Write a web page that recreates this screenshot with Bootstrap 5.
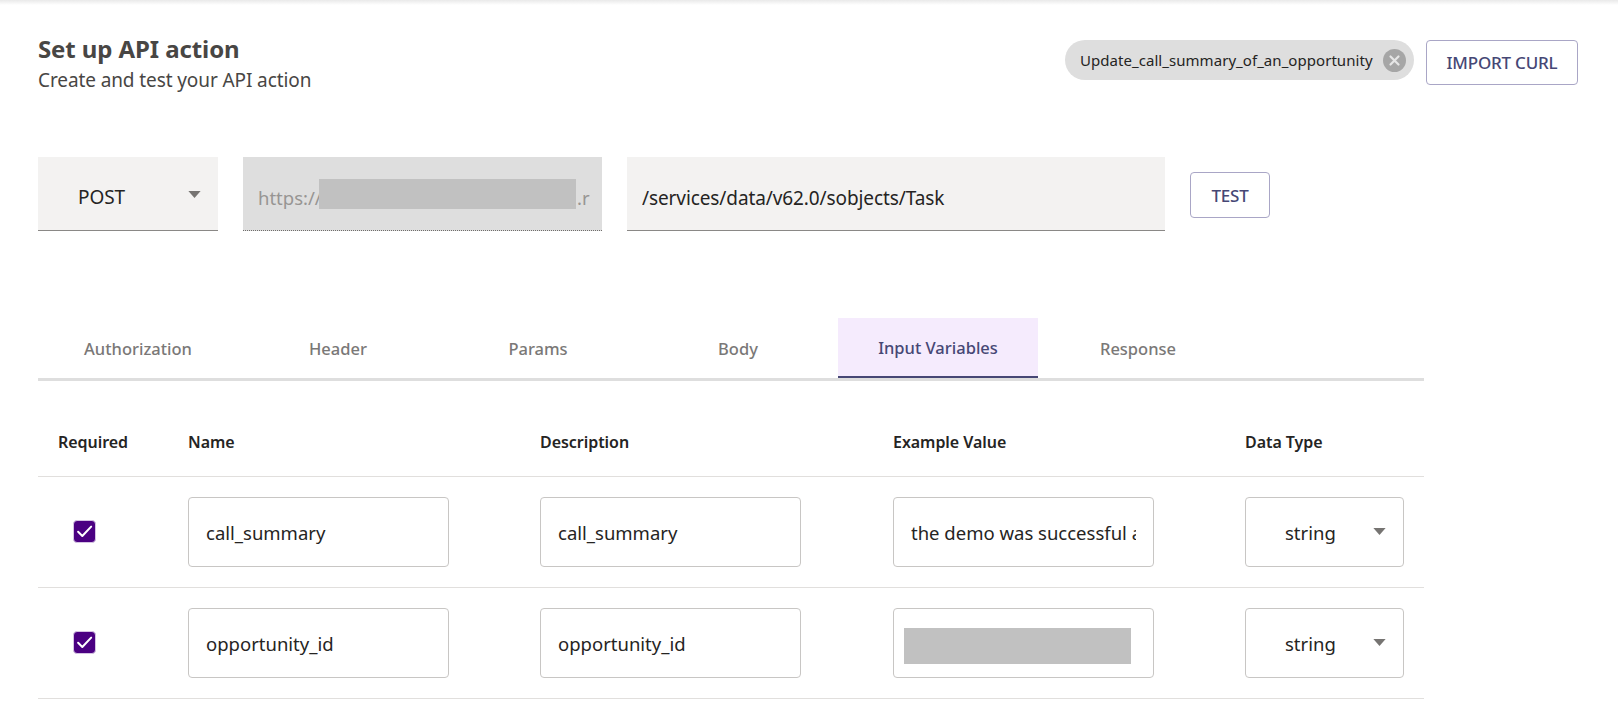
<!doctype html>
<html lang="en">
<head>
<meta charset="utf-8">
<title>Set up API action</title>
<link href="https://cdn.jsdelivr.net/npm/bootstrap@5.3.0/dist/css/bootstrap.min.css" rel="stylesheet">
<style>
html,body{height:721px;overflow:hidden}
body{font-family:"Noto Sans","Open Sans",sans-serif;color:#252423;background:#fff}
.topshade{height:5px;background:linear-gradient(#e9e9e9,#fff)}
.pagewrap{padding:0 40px 0 38px}
.headrow{height:80px;padding-top:30px}
.ttl{font-size:24px;line-height:30px;font-weight:700;color:#484644;margin:-1px 0 1px;letter-spacing:-.1px}
.sub{font-size:19px;line-height:30px;color:#484644;letter-spacing:-.1px}
.headright{margin-top:5px}
.chip{height:40px;width:349px;padding:0 8px 0 15px;border-radius:20px;background:#dedede;font-size:15px;letter-spacing:.05px;color:#252423}
.xdot{width:23px;height:23px;flex:none}
.outbtn{border:1px solid #a9a6c6;border-radius:4px;background:#fff;color:#464775;font-weight:500;font-size:17px;letter-spacing:-.2px;padding:0}
.outbtn:hover{background:#fff;color:#464775;border-color:#a9a6c6}
.btn-import{width:152px;height:45px;margin-left:12px}
.urlrow{margin-top:72px;height:74px;gap:25px}
.fld{height:74px;border:0;border-bottom:1px solid #8a8886;border-radius:0;background-color:#f3f2f1;font-size:19px;letter-spacing:-.1px;color:#252423}
.fld:focus{background-color:#f3f2f1;box-shadow:none;border-color:#8a8886}
.methodsel{width:180px;padding:8px 30px 0 40px;background-position:right 17px top 34px;background-size:13px 7px;background-image:url("data:image/svg+xml,%3csvg xmlns='http://www.w3.org/2000/svg' viewBox='0 0 14 8'%3e%3cpath fill='%23767472' d='M0 0h14L7 8z'/%3e%3c/svg%3e")}
.hostbox{width:359px;background:#dedede;border-bottom:1px dotted #6f6d6b;padding:8px 0 0 15px;font-size:18.5px;color:#979593;white-space:nowrap}
.hostpre{width:61px;flex:none}
.blot{background:#c1c1c1;flex:none}
.blot-host{width:257px;height:30px;margin-top:-8px}
.hostend{margin-left:1px}
.pathfld{width:538px;padding:8px 15px 0}
.btn-test{width:80px;height:46px;align-self:center;margin-top:2px;padding-top:1px}
.tabstrip{margin-top:87px;width:1386px;height:63px;border-bottom:3px solid #dedede}
.tabitem{width:200px;height:61px;line-height:60px;text-align:center;color:#7a7877;font-size:16.5px;font-weight:500;padding:0;border:0;border-radius:0;background:transparent}
.tabitem.on{background:#f5ebfd;color:#464775;border-bottom:2px solid #464775;margin-bottom:-1px;height:60px}
.vartable{width:1386px;table-layout:fixed;margin:0}
.vartable>:not(caption)>*>*{padding:0;border-bottom:1px solid #e1dfdd;vertical-align:middle;box-shadow:none;background:transparent;color:#252423}
.vartable>thead>tr>th{height:95px;padding-top:28px;font-size:16px;font-weight:600;letter-spacing:-.05px}
.vartable tbody td{height:111px}
.vartable>thead>tr>th.thfirst{padding-left:20px}
.ticker{width:23px;height:23px;margin:0 0 0 35px;background-color:#4b0082;border-color:#d5c3e3;border-radius:4px;display:block;opacity:1!important;float:none}
.ticker:checked{background-color:#4b0082;border-color:#d5c3e3;background-size:100% 100%;background-image:url("data:image/svg+xml,%3csvg xmlns='http://www.w3.org/2000/svg' viewBox='0 0 23 23'%3e%3cpath fill='none' stroke='%23fff' stroke-width='2.2' stroke-linecap='round' stroke-linejoin='round' d='M4.5 11.8l4.6 4.6L18.8 6.2'/%3e%3c/svg%3e")}
.ticker:focus{box-shadow:none}
.boxin{width:261px;height:70px;border:1px solid #c8c6c4;border-radius:4px;padding:2px 17px 0;font-size:18.5px;color:#252423}
.boxin:focus{box-shadow:none;border-color:#c8c6c4}
.boxredact{padding:6px 0 0 10px;display:flex;align-items:center}
.blot-ex{width:227px;height:36px}
.typesel{width:159px;height:70px;border:1px solid #c8c6c4;border-radius:4px;padding:2px 30px 0 39px;font-size:18.5px;color:#252423;background-position:right 17px top 30px;background-size:13px 7px;background-image:url("data:image/svg+xml,%3csvg xmlns='http://www.w3.org/2000/svg' viewBox='0 0 14 8'%3e%3cpath fill='%23767472' d='M0 0h14L7 8z'/%3e%3c/svg%3e")}
.typesel:focus{box-shadow:none;border-color:#c8c6c4}
.colw1{width:150px}.colw2{width:352px}.colw3{width:353px}.colw4{width:352px}.colw5{width:179px}
</style>
</head>
<body>
<div class="topshade"></div>
<main class="pagewrap">
  <section class="headrow d-flex justify-content-between align-items-start">
    <div>
      <h1 class="ttl">Set up API action</h1>
      <div class="sub">Create and test your API action</div>
    </div>
    <div class="headright d-flex align-items-start">
      <div class="chip d-flex align-items-center justify-content-between">
        <span>Update_call_summary_of_an_opportunity</span>
        <svg class="xdot" viewBox="0 0 23 23" aria-hidden="true"><circle cx="11.5" cy="11.5" r="11.5" fill="#a6a6a6"/><path d="M7.5 7.5l8 8M15.5 7.5l-8 8" stroke="#e6e6e6" stroke-width="2.2" stroke-linecap="round"/></svg>
      </div>
      <button type="button" class="btn outbtn btn-import">IMPORT CURL</button>
    </div>
  </section>

  <section class="urlrow d-flex">
    <select class="form-select fld methodsel" aria-label="Method"><option>POST</option><option>GET</option></select>
    <div class="hostbox d-flex align-items-center">
      <span class="hostpre">https://</span><span class="blot blot-host"></span><span class="hostend">.r</span>
    </div>
    <input class="form-control fld pathfld" type="text" value="/services/data/v62.0/sobjects/Task" aria-label="Path">
    <button type="button" class="btn outbtn btn-test">TEST</button>
  </section>

  <nav class="tabstrip d-flex align-items-start">
    <button type="button" class="btn tabitem">Authorization</button>
    <button type="button" class="btn tabitem">Header</button>
    <button type="button" class="btn tabitem">Params</button>
    <button type="button" class="btn tabitem">Body</button>
    <button type="button" class="btn tabitem on">Input Variables</button>
    <button type="button" class="btn tabitem">Response</button>
  </nav>

  <table class="table vartable">
    <colgroup><col class="colw1"><col class="colw2"><col class="colw3"><col class="colw4"><col class="colw5"></colgroup>
    <thead>
      <tr><th class="thfirst">Required</th><th>Name</th><th>Description</th><th>Example Value</th><th>Data Type</th></tr>
    </thead>
    <tbody>
      <tr>
        <td><input class="form-check-input ticker" type="checkbox" checked aria-label="Required"></td>
        <td><input class="form-control boxin" type="text" value="call_summary" aria-label="Name"></td>
        <td><input class="form-control boxin" type="text" value="call_summary" aria-label="Description"></td>
        <td><input class="form-control boxin" type="text" value="the demo was successful and the customer agreed" aria-label="Example value"></td>
        <td><select class="form-select typesel" aria-label="Data type"><option>string</option></select></td>
      </tr>
      <tr>
        <td><input class="form-check-input ticker" type="checkbox" checked aria-label="Required"></td>
        <td><input class="form-control boxin" type="text" value="opportunity_id" aria-label="Name"></td>
        <td><input class="form-control boxin" type="text" value="opportunity_id" aria-label="Description"></td>
        <td><div class="form-control boxin boxredact"><span class="blot blot-ex"></span></div></td>
        <td><select class="form-select typesel" aria-label="Data type"><option>string</option></select></td>
      </tr>
    </tbody>
  </table>
</main>
<script src="https://cdn.jsdelivr.net/npm/bootstrap@5.3.0/dist/js/bootstrap.bundle.min.js"></script>
</body>
</html>
